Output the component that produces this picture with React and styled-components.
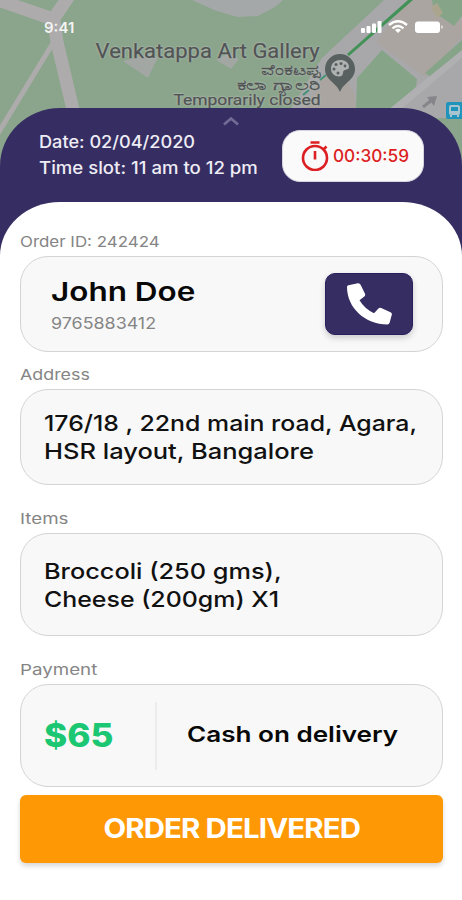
import React from 'react';
import styled, { createGlobalStyle } from 'styled-components';

const GlobalStyle = createGlobalStyle`
  * { box-sizing: border-box; }
  body { margin: 0; background: #fff; font-family: Inter, 'Noto Sans', sans-serif; }
  p, h1, h2 { margin: 0; }
`;

const Screen = styled.main`
  position: relative;
  width: 462px;
  height: 900px;
  overflow: hidden;
  background: #fff;
  display: flex;
  flex-direction: column;
`;

/* Wide-set text: the letters are stretched sideways from their starting edge. */
const WideText = styled.p`
  width: max-content;
  white-space: nowrap;
  transform: scaleX(${(p) => p.$stretch || 1});
  transform-origin: ${(p) => p.$origin || 'left'} center;
`;

const MapDrawing = styled.svg`
  position: absolute;
  top: 0;
  left: 0;
  width: 462px;
  height: 260px;
`;

const MapHeader = styled.header`
  position: relative;
  height: 108px;
  flex: none;
`;

const StatusBar = styled.div`
  display: flex;
  justify-content: space-between;
  align-items: center;
  padding: 17px 17px 0 44px;
  height: 37px;
`;

const Clock = styled(WideText)`
  font: 600 15px/20px Inter, sans-serif;
  color: #f4f4f4;
  padding-top: 2px;
`;

const StatusIcons = styled.svg`
  width: 84px;
  height: 16px;
`;

const PlaceLabels = styled.div`
  position: absolute;
  top: 41px;
  right: 142px;
  display: flex;
  flex-direction: column;
  align-items: flex-end;
  color: #505454;
  text-shadow: 0 0 2px #b3bab3, 0 0 2px #b3bab3, 0 0 1px #b3bab3;
`;

const PlaceName = styled(WideText)`
  font: 400 20px/21px Roboto, sans-serif;
  -webkit-text-stroke: 0.25px #505454;
`;

const PlaceLocal = styled(WideText)`
  font: 500 14px/15px 'Noto Sans', sans-serif;
  -webkit-text-stroke: 0.3px #505454;
`;

const PlaceStatus = styled(WideText)`
  font: 400 14.5px/17px Roboto, sans-serif;
  -webkit-text-stroke: 0.25px #505454;
`;

const SlotPanel = styled.section`
  position: relative;
  flex: 1;
  display: flex;
  flex-direction: column;
  align-items: center;
  background: linear-gradient(#362e62 0 150px, #fff 150px);
  border-radius: 60px 60px 0 0 / 58px 58px 0 0;
`;

const PullMark = styled.svg`
  flex: none;
  margin-top: 8px;
  width: 18px;
  height: 10px;
`;

const SlotRow = styled.div`
  flex: none;
  width: 100%;
  height: 76px;
  padding: 3px 38px 0 39px;
  display: flex;
  justify-content: space-between;
  align-items: flex-start;
`;

const SlotText = styled(WideText)`
  font: 500 17px/26px Inter, sans-serif;
  color: #eeecf5;
`;

const Timer = styled.div`
  flex: none;
  width: 142px;
  height: 52px;
  margin-top: 1px;
  padding-left: 18px;
  display: flex;
  align-items: center;
  gap: 4px;
  border-radius: 18px;
  border: 1px solid #d5d3de;
  background: #fafafa;
`;

const TimerText = styled(WideText)`
  font: 500 17px/24px Inter, sans-serif;
  color: #dc1f22;
`;

const Sheet = styled.section`
  flex: 1;
  width: 100%;
  padding: 30px 19px 0 20px;
  background: #fff;
  border-radius: 60px 60px 0 0 / 54px 54px 0 0;
`;

const FieldLabel = styled(WideText)`
  margin: ${(p) => p.$space || 0}px 0 4px;
  font: 400 15px/20px Inter, sans-serif;
  color: #858585;
`;

const Card = styled.div`
  height: ${(p) => p.$height}px;
  padding-left: ${(p) => p.$inset || 23}px;
  border: 1.5px solid #d4d4d4;
  border-radius: 28px;
  background: #f8f8f8;
  display: flex;
  align-items: center;
`;

const Customer = styled.div`
  flex: 1;
`;

const CustomerName = styled(WideText)`
  font: 600 26px/34px Inter, sans-serif;
  color: #080808;
  padding-top: 2px;
`;

const CustomerPhone = styled(WideText)`
  font: 400 16px/24px Inter, sans-serif;
  color: #858585;
  padding-top: 2px;
`;

const CallButton = styled.button`
  width: 88px;
  height: 62px;
  margin-right: 29px;
  padding: 0;
  display: grid;
  place-items: center;
  border: 1px solid #291f5e;
  border-radius: 10px;
  background: #362e62;
  box-shadow: 0 3px 6px rgba(0, 0, 0, 0.18);
`;

const DetailLine = styled(WideText)`
  font: 500 22px/28px Inter, sans-serif;
  color: #111;
`;

const Amount = styled(WideText)`
  width: 111px;
  font: 800 32px/40px Inter, sans-serif;
  color: #1bc773;
`;

const Rule = styled.div`
  width: 2px;
  height: 68px;
  background: #ececec;
  margin-right: 30px;
`;

const Method = styled(WideText)`
  font: 600 22px/30px Inter, sans-serif;
  color: #080808;
  padding-bottom: 3px;
`;

const DeliveredButton = styled.button`
  width: 100%;
  height: 68px;
  margin-top: 8px;
  padding: 0;
  display: flex;
  justify-content: center;
  align-items: center;
  border: 0;
  border-radius: 6px;
  background: #ff9805;
  box-shadow: 0 3px 5px rgba(0, 0, 0, 0.16);
`;

const ButtonText = styled(WideText).attrs({ as: 'span' })`
  font: 700 27px/34px Inter, sans-serif;
  letter-spacing: -0.8px;
  color: #fff;
`;

function CityMap() {
  return (
    <MapDrawing viewBox="0 0 462 260" aria-hidden="true">
      <rect width="462" height="260" fill="#8aa58b" />
      <g fill="none" stroke="#adabab">
        <path d="M-5-1 53 19" strokeWidth="13" />
        <path d="M52 21 69-4" strokeWidth="13" />
        <path d="M53 15 57 42 75 118" strokeWidth="13" />
        <path d="M53 43-3 135" strokeWidth="5" />
      </g>
      <path d="M192 0 214 10 237 17 258 16 275 7 283 0Z" fill="#a5a8a9" />
      <path d="M123 61 148 78 158 57 150 54ZM216 60 231 69 239 59 229 53Z" fill="#a3a7a4" />
      <path d="M384 0 322 58 290 110 290 118H462V0Z" fill="#a8a8ab" />
      <path d="M408 0 376 42 425 77 462 37V22L434 0Z" fill="#aaa5a0" />
      <path d="M322 76 306 108H356L354 92 343 75Z" fill="#aaa5a0" />
      <path d="M357 78 382 50 417 79 416 87 390 110H356Z" fill="#86a588" />
      <path d="M432 0H462V16L454 26 434 12Z" fill="#86a588" />
      <path d="M425 73 462 40V58L435 80Z" fill="#86a588" />
      <path d="M431 7 437 3 443 13 437 18Z" fill="#aaa58c" />
      <path d="M388 110 462 50V58L400 110Z" fill="#b0b0b2" />
      <path d="M408 0 413 0 349 56 347 54Z" fill="#429257" />
      <path d="M326 75 320 80M309 90 303 95" stroke="#429276" strokeWidth="2" />
      <path d="M423 107 433 99" fill="none" stroke="#85858a" strokeWidth="3" />
      <path d="M427 97 437 96 434 106Z" fill="#85858a" />
      <path d="M340 92C336 82 325 80 325 69A15 15 0 0 1 355 69C355 80 344 82 340 92Z" fill="#58615f" />
      <path d="M331 69C331 57 349 58 349 67C349 71 343 68 343 73C343 79 331 77 331 69Z" fill="#aeb2b1" />
      <g fill="#58615f">
        <circle cx="334" cy="69" r="1.5" />
        <circle cx="336" cy="64.500" r="1.500" />
        <circle cx="341" cy="63.500" r="1.500" />
        <circle cx="345" cy="66" r="1.400" />
        <circle cx="338" cy="73" r="1.500" />
      </g>
      <rect x="446" y="102" width="17" height="17" rx="2" fill="#2094ba" />
      <rect x="449" y="105" width="11" height="10" rx="2" fill="#a8c5cf" />
      <path d="M451 107H458V111H451Z" fill="#2094ba" />
      <path d="M451 115V117M458 115V117" stroke="#a8c5cf" strokeWidth="2" />
    </MapDrawing>
  );
}

function SignalIcons() {
  return (
    <StatusIcons viewBox="0 0 84 16" fill="#fff">
      <rect x="0" y="9" width="4" height="5" rx="1" />
      <rect x="5.500" y="7" width="4" height="7" rx="1" />
      <rect x="11" y="4.500" width="4" height="9.500" rx="1" />
      <rect x="16.500" y="2" width="4" height="12" rx="1" />
      <g fill="none" stroke="#fff" strokeWidth="2.300">
        <path d="M28 6Q37-1.500 46 6" />
        <path d="M31.500 9.300Q37 4.800 42.500 9.300" />
      </g>
      <path d="M34 11Q37 8.700 40 11L37 14Z" />
      <rect x="54" y="2.500" width="25" height="11.500" rx="3" />
      <path d="M80.500 6Q83 8 80.500 10Z" />
    </StatusIcons>
  );
}

function Stopwatch() {
  return (
    <svg width="28" height="30" viewBox="0 0 28 30" fill="none" stroke="#dc1f22" strokeWidth="2.600">
      <circle cx="14" cy="17" r="12" />
      <path d="M9.500 1.500H18.500M14 10V18.500M22.500 8.500 25.500 5.500" />
    </svg>
  );
}

function Handset() {
  return (
    <svg width="46" height="42" viewBox="0 0 46 42" fill="#fff">
      <path d="M2.500 2.200 11.800.3Q13.700 0 14.600 1.800L19 10.800Q19.600 12.300 18.300 13.500L13.500 17.300Q18.500 25.800 28 30.200L32.200 25.700Q33.500 24.500 35.200 25L44.500 29.300Q46.300 30.200 45.800 31.800L43.600 39.800Q43.100 41.400 41.300 41.400C19 41.400 1 24.800 1 4Q1 2.500 2.500 2.200Z" />
    </svg>
  );
}

export default function App() {
  return (
    <Screen>
      <GlobalStyle />
      <CityMap />
      <MapHeader>
        <StatusBar>
          <Clock>9:41</Clock>
          <SignalIcons />
        </StatusBar>
        <PlaceLabels>
          <PlaceName $stretch={1.1} $origin="right">Venkatappa Art Gallery</PlaceName>
          <PlaceLocal $stretch={1.44} $origin="right">ವೆಂಕಟಪ್ಪ</PlaceLocal>
          <PlaceLocal $stretch={1.52} $origin="right">ಕಲಾ ಗ್ಯಾಲರಿ</PlaceLocal>
          <PlaceStatus $stretch={1.2} $origin="right">Temporarily closed</PlaceStatus>
        </PlaceLabels>
      </MapHeader>
      <SlotPanel>
        <PullMark viewBox="0 0 18 10">
          <path d="M2 8.500 9 2.500 16 8.500" fill="none" stroke="#736b95" strokeWidth="2.800" />
        </PullMark>
        <SlotRow>
          <div>
            <SlotText $stretch={1.067}>Date: 02/04/2020</SlotText>
            <SlotText $stretch={1.093}>Time slot: 11 am to 12 pm</SlotText>
          </div>
          <Timer>
            <Stopwatch />
            <TimerText $stretch={1.012}>00:30:59</TimerText>
          </Timer>
        </SlotRow>
        <Sheet>
          <FieldLabel $stretch={1.127}>Order ID: 242424</FieldLabel>
          <Card $height={96} $inset={30}>
            <Customer>
              <CustomerName as="h1" $stretch={1.21}>John Doe</CustomerName>
              <CustomerPhone $stretch={1.117}>9765883412</CustomerPhone>
            </Customer>
            <CallButton aria-label="Call customer">
              <Handset />
            </CallButton>
          </Card>
          <FieldLabel $space={13} $stretch={1.19}>Address</FieldLabel>
          <Card $height={96}>
            <div>
              <DetailLine $stretch={1.13}>176/18 , 22nd main road, Agara,</DetailLine>
              <DetailLine $stretch={1.158}>HSR layout, Bangalore</DetailLine>
            </div>
          </Card>
          <FieldLabel $space={24} $stretch={1.25}>Items</FieldLabel>
          <Card $height={103}>
            <div>
              <DetailLine $stretch={1.15}>Broccoli (250 gms),</DetailLine>
              <DetailLine $stretch={1.132}>Cheese (200gm) X1</DetailLine>
            </div>
          </Card>
          <FieldLabel $space={24} $stretch={1.25}>Payment</FieldLabel>
          <Card $height={103}>
            <Amount $stretch={1.1}>$65</Amount>
            <Rule />
            <Method $stretch={1.185}>Cash on delivery</Method>
          </Card>
          <DeliveredButton>
            <ButtonText $stretch={1.09} $origin="center">ORDER DELIVERED</ButtonText>
          </DeliveredButton>
        </Sheet>
      </SlotPanel>
    </Screen>
  );
}
